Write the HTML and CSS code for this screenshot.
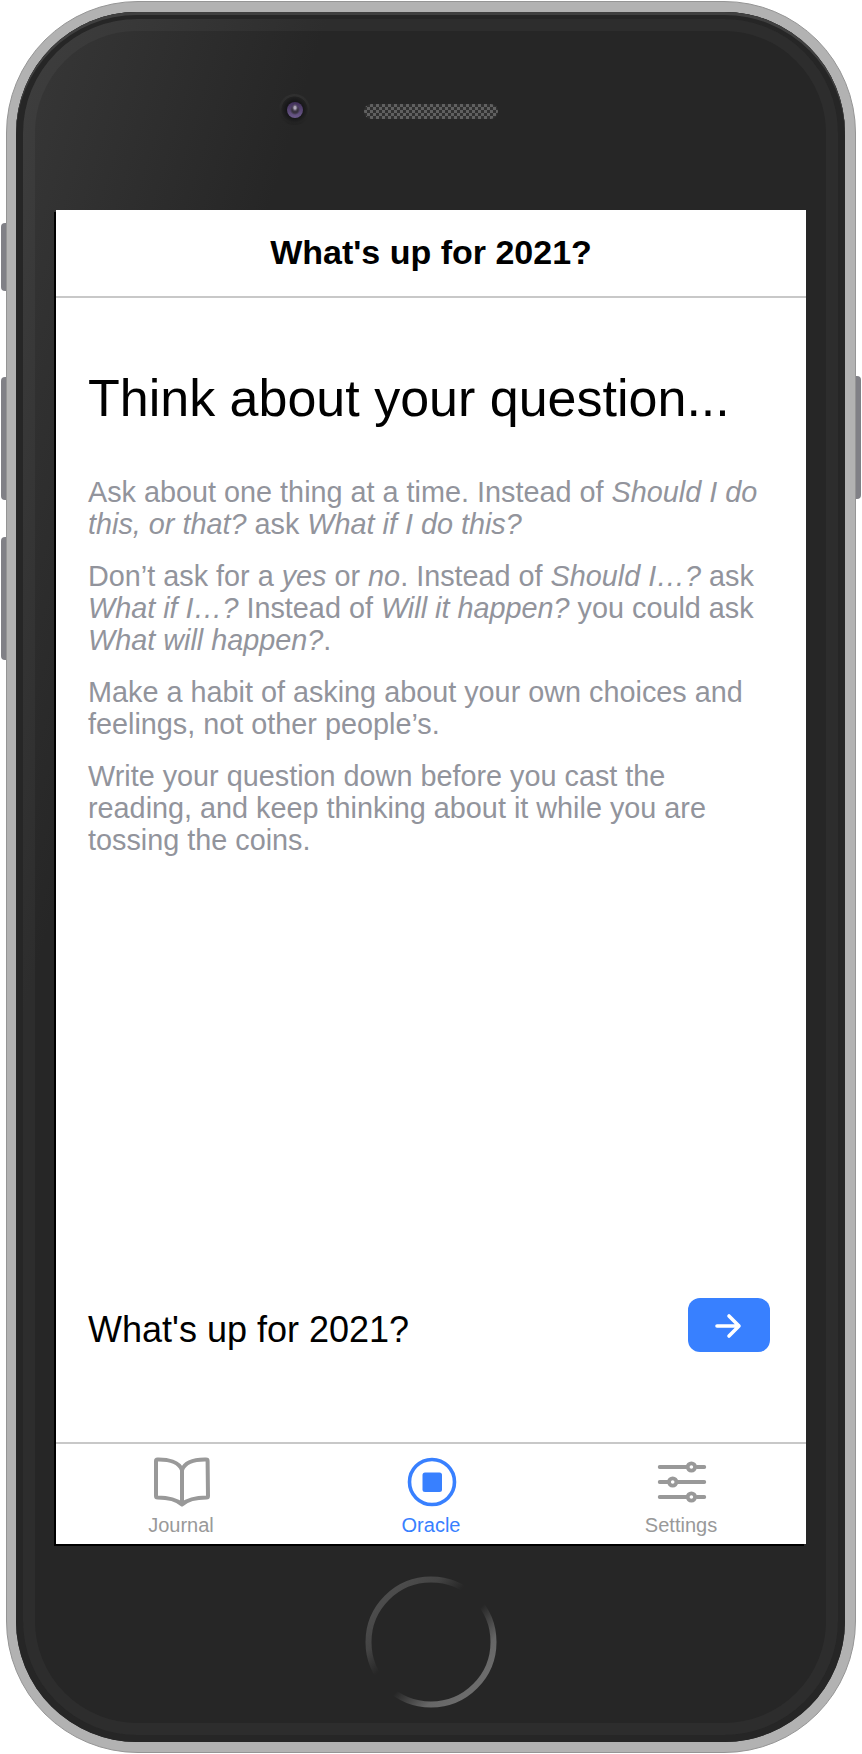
FILE: index.html
```html
<!DOCTYPE html>
<html lang="en">
<head>
<meta charset="utf-8">
<title>What's up for 2021?</title>
<link rel="stylesheet" href="styles.css">
</head>
<body>
<div class="device">
  <span class="key key-mute"></span>
  <span class="key key-up"></span>
  <span class="key key-down"></span>
  <span class="key key-power"></span>
  <div class="shell">
    <div class="face">
      <div class="rim"></div>
      <div class="sensors">
        <span class="camera"><span class="lens"></span></span>
        <span class="speaker"></span>
      </div>
      <div class="screen">
        <header class="navbar">What's up for 2021?</header>
        <main class="content">
          <h1 class="heading">Think about your question...</h1>
          <div class="tips">
            <p>Ask about one thing at a time. Instead of <em>Should I do this, or that?</em> ask <em>What if I do this?</em></p>
            <p>Don’t ask for a <em>yes</em> or <em>no</em>. Instead of <em>Should I…?</em> ask <em>What if I…?</em> Instead of <em>Will it happen?</em> you could ask <em>What will happen?</em>.</p>
            <p>Make a habit of asking about your own choices and feelings, not other people’s.</p>
            <p>Write your question down before you cast the reading, and keep thinking about it while you are tossing the coins.</p>
          </div>
          <div class="ask">
            <span class="question">What's up for 2021?</span>
            <button class="go" aria-label="Continue">
              <svg width="28" height="28" viewBox="1 -1 28 28" fill="none" stroke="#fff" stroke-width="3.6" stroke-linecap="round" stroke-linejoin="round"><path d="M3 14H25M15 4L25 14L15 24"/></svg>
            </button>
          </div>
        </main>
        <nav class="tabs">
          <a class="tab">
            <svg width="60" height="52" viewBox="0 0 60 52" fill="none" stroke="#999" stroke-width="4" stroke-linecap="round" stroke-linejoin="round"><path d="M30 14C27 6 16 3.300 5.500 3.500Q4 3.500 4 5V40Q4 41.500 5.500 41.500C16 41.500 24 43 30 48.500C36 43 44 41.500 54.500 41.500Q56 41.500 56 40L55.600 5Q55.600 3.500 54 3.500C43 3.300 33 6 30 14V48.500"/></svg>
            <span>Journal</span>
          </a>
          <a class="tab active">
            <svg width="52" height="52" viewBox="0 0 52 52"><circle cx="26" cy="26" r="22.500" fill="none" stroke="#3880ff" stroke-width="3.600"/><rect x="16.500" y="16.500" width="19.500" height="19.500" rx="2.500" fill="#3880ff"/></svg>
            <span>Oracle</span>
          </a>
          <a class="tab">
            <svg width="52" height="52" viewBox="0 0 52 52" fill="none" stroke="#999" stroke-width="3.800" stroke-linecap="round"><path d="M3.700 11H31M41 11H48.300M3.700 26H13M22 26H48.300M3.700 41H31M41 41H48.300"/><circle cx="35.400" cy="11" r="3.700"/><circle cx="16.700" cy="26" r="3.700"/><circle cx="35.400" cy="41" r="3.700"/></svg>
            <span>Settings</span>
          </a>
        </nav>
      </div>
      <svg class="home" width="132" height="132" viewBox="0 0 132 132">
        <defs><linearGradient id="ring" x1="0" y1="0" x2="1" y2="1">
          <stop offset=".15" stop-color="#4c4c4c"/><stop offset=".28" stop-color="#444"/><stop offset=".41" stop-color="#262626"/>
          <stop offset=".56" stop-color="#262626"/><stop offset=".74" stop-color="#666"/><stop offset=".85" stop-color="#6c6c6c"/>
        </linearGradient></defs>
        <circle cx="66" cy="66" r="62.500" fill="none" stroke="url(#ring)" stroke-width="6"/>
      </svg>
    </div>
  </div>
</div>
</body>
</html>
```
FILE: styles.css
```css
* { box-sizing: border-box; }
body {
  margin: 0;
  background: #fff;
  font-family: "Liberation Sans", Arial, sans-serif;
}
.device {
  position: relative;
  width: 862px;
  height: 1754px;
  padding: 1px 6.500px 1px 5.500px;
}
.key {
  position: absolute;
  left: 1px;
  width: 12px;
  background: #808086;
  border-radius: 4px;
}
.key-mute { top: 223px; height: 68px; }
.key-up { top: 377px; height: 123px; }
.key-down { top: 537px; height: 123px; }
.key-power { top: 376px; height: 123px; left: 849px; }
.shell {
  position: relative;
  height: 1752px;
  padding: 10px 10px 9px 9.500px;
  background: #b2b2b2;
  border: 1px solid #959595;
  border-radius: 132px;
}
.face {
  position: relative;
  display: flex;
  flex-direction: column;
  height: 1730px;
  padding: 0 38.500px 0 40px;
  border-radius: 121px;
  background: linear-gradient(107deg, #383838 0, #262626 300px);
}
.face::before {
  content: "";
  position: absolute;
  inset: 0;
  border-radius: 121px;
  box-shadow: inset 0 3px 0 #404040, inset 0 0 0 7px #262626;
}
.rim {
  position: absolute;
  inset: 7px;
  border: 12px solid rgba(255, 255, 255, .035);
  border-radius: 114px;
}
.sensors {
  display: flex;
  align-items: center;
  height: 198px;
  flex: none;
  padding: 0 0 3px 223px;
  gap: 54px;
}
.camera {
  display: grid;
  place-items: center;
  width: 31px;
  height: 31px;
  border-radius: 50%;
  background: radial-gradient(#151517 35%, #222 58%, transparent 61%), linear-gradient(#303030, #222);
}
.lens {
  width: 16px;
  height: 16px;
  border-radius: 50%;
  background: radial-gradient(ellipse at 50% 36%, #b0a8ba 0 1px, #60586b 2px, transparent 3px), radial-gradient(circle, #38323f 0 3px, transparent 5px), linear-gradient(#402f58, #6d5b8b);
}
.speaker {
  width: 134px;
  height: 15px;
  margin-top: 3px;
  border-radius: 8px;
  background: repeating-conic-gradient(#303030 0 25%, #606060 0 50%) 0 0 / 6px 6px;
}
.screen {
  position: relative;
  display: flex;
  flex-direction: column;
  flex: none;
  width: 750px;
  height: 1334px;
  background: #fff;
  box-shadow: -2px 2px 0 #000;
}
.navbar {
  height: 88px;
  flex: none;
  border-bottom: 2px solid #c8c8c8;
  font-size: 34px;
  font-weight: 700;
  line-height: 84px;
  text-align: center;
}
.content {
  display: flex;
  flex-direction: column;
  flex: 1;
  padding: 70px 32px 90px;
}
.heading {
  margin: 0;
  font-size: 52px;
  font-weight: 400;
  line-height: 60px;
}
.tips {
  margin-top: 48px;
  color: #92949c;
  font-size: 28.800px;
  line-height: 32px;
}
.tips p { margin: 0 0 20px; }
.ask {
  display: flex;
  justify-content: space-between;
  align-items: center;
  margin-top: auto;
  padding-right: 4px;
}
.question {
  font-size: 36px;
  line-height: 42px;
  padding-top: 10px;
}
.go {
  display: grid;
  place-items: center;
  width: 82px;
  height: 54px;
  padding: 0;
  border: 0;
  border-radius: 12px;
  background: #3880ff;
}
.tabs {
  display: grid;
  grid-template-columns: repeat(3, 1fr);
  height: 102px;
  flex: none;
  border-top: 2px solid #c8c8c8;
}
.tab {
  display: flex;
  flex-direction: column;
  align-items: center;
  padding-top: 12px;
  color: #999;
  font-size: 20px;
  line-height: 24px;
  gap: 5px;
}
.tab svg { margin-left: 2px; }
.active { color: #3880ff; }
.home {
  align-self: center;
  flex: none;
  margin-top: 32px;
}
```
